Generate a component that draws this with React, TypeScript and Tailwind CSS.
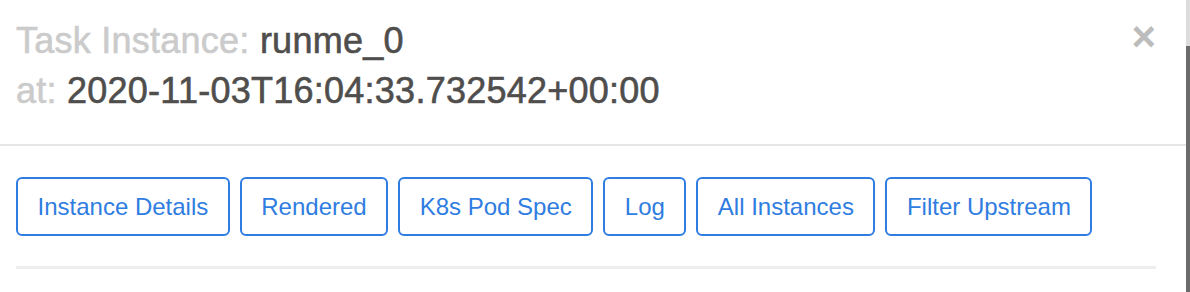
import React from "react";

const buttons = [
  "Instance Details",
  "Rendered",
  "K8s Pod Spec",
  "Log",
  "All Instances",
  "Filter Upstream",
];

export default function App() {
  return (
    <div
      className="flex w-full h-[292px] bg-white overflow-hidden"
      style={{ fontFamily: '"Liberation Sans", Arial, sans-serif' }}
    >
      <div className="flex-1 flex flex-col">
        <div className="flex justify-between items-start pl-[16px] pr-[30px] pt-[16px] h-[146px] border-b-2 border-[#e5e5e5]">
          <h4 className="text-[36px] leading-[50px] font-medium text-[#4f4e4d] m-0 tracking-[0.25px] [-webkit-text-stroke:0.6px]">
            <span className="text-[#cbcbcb]">Task Instance:</span> runme_0
            <br />
            <span className="text-[#cbcbcb]">at:</span> 2020-11-03T16:04:33.732542+00:00
          </h4>
          <button className="text-[42px] font-bold leading-none text-[#bcbcbc] mt-0">
            ×
          </button>
        </div>
        <div className="pl-[16px] pt-[31px]">
          <div className="flex gap-[10px]">
            {buttons.map((b) => (
              <button
                key={b}
                className="h-[59px] px-[19.5px] border-2 border-[#2f7de1] rounded-[6px] text-[24px] text-[#2f7de1] bg-white leading-none"
              >
                {b}
              </button>
            ))}
          </div>
          <div className="mt-[30px] h-[3px] bg-[#eeeeee] mr-[30px]" />
        </div>
      </div>
      <div className="w-[4px] flex flex-col">
        <div className="h-[46px] bg-[#dcdcdc]" />
        <div className="flex-1 bg-[#6b6b6b]" />
      </div>
    </div>
  );
}
